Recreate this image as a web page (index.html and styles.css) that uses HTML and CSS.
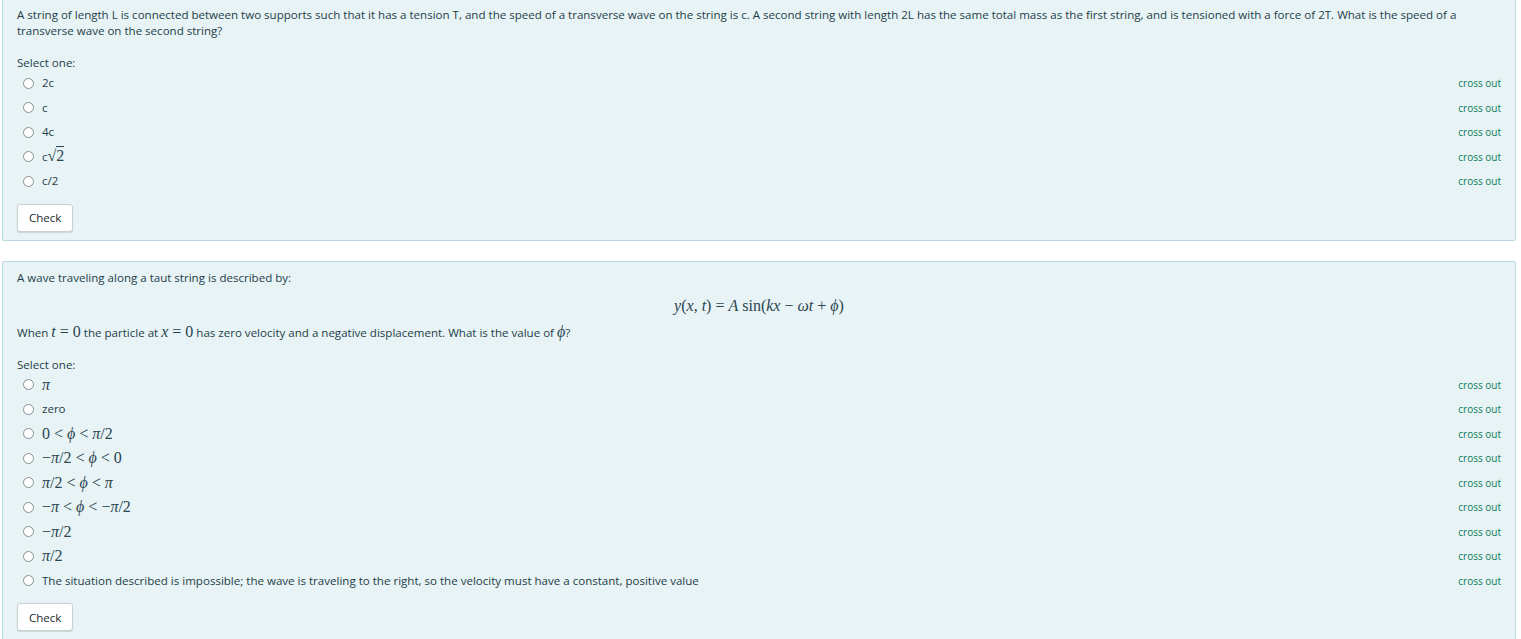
FILE: index.html
```html
<!DOCTYPE html>
<html lang="en">
<head>
<meta charset="utf-8">
<title>Quiz</title>
<link rel="stylesheet" href="styles.css">
</head>
<body>
<div class="page">
  <div class="que first">
    <div class="qtext">
      <p>A string of length L is connected between two supports such that it has a tension T, and the speed of a transverse wave on the string is c. A second string with length 2L has the same total mass as the first string, and is tensioned with a force of 2T. What is the speed of a transverse wave on the second string?</p>
    </div>
    <div class="prompt">Select one:</div>
    <div class="answer">
      <div class="opt"><span class="radio"></span><span class="lbl">2c</span><span class="cross">cross out</span></div>
      <div class="opt"><span class="radio"></span><span class="lbl">c</span><span class="cross">cross out</span></div>
      <div class="opt"><span class="radio"></span><span class="lbl">4c</span><span class="cross">cross out</span></div>
      <div class="opt"><span class="radio"></span><span class="lbl">c<span class="m sqrt">√<span class="ov">2</span></span></span><span class="cross">cross out</span></div>
      <div class="opt"><span class="radio"></span><span class="lbl">c/2</span><span class="cross">cross out</span></div>
    </div>
    <button class="check">Check</button>
  </div>

  <div class="que">
    <div class="qtext">
      <p>A wave traveling along a taut string is described by:</p>
      <div class="display m"><i>y</i>(<i>x</i>, <i>t</i>) = <i>A</i> sin(<i>kx</i> − <i>ωt</i> + <i>ϕ</i>)</div>
      <p>When <span class="m"><i>t</i> = 0</span> the particle at <span class="m"><i>x</i> = 0</span> has zero velocity and a negative displacement. What is the value of <span class="m"><i>ϕ</i></span>?</p>
    </div>
    <div class="prompt">Select one:</div>
    <div class="answer">
      <div class="opt"><span class="radio"></span><span class="lbl m"><i>π</i></span><span class="cross">cross out</span></div>
      <div class="opt"><span class="radio"></span><span class="lbl">zero</span><span class="cross">cross out</span></div>
      <div class="opt"><span class="radio"></span><span class="lbl m">0 &lt; <i>ϕ</i> &lt; <i>π</i>/2</span><span class="cross">cross out</span></div>
      <div class="opt"><span class="radio"></span><span class="lbl m">−<i>π</i>/2 &lt; <i>ϕ</i> &lt; 0</span><span class="cross">cross out</span></div>
      <div class="opt"><span class="radio"></span><span class="lbl m"><i>π</i>/2 &lt; <i>ϕ</i> &lt; <i>π</i></span><span class="cross">cross out</span></div>
      <div class="opt"><span class="radio"></span><span class="lbl m">−<i>π</i> &lt; <i>ϕ</i> &lt; −<i>π</i>/2</span><span class="cross">cross out</span></div>
      <div class="opt"><span class="radio"></span><span class="lbl m">−<i>π</i>/2</span><span class="cross">cross out</span></div>
      <div class="opt"><span class="radio"></span><span class="lbl m"><i>π</i>/2</span><span class="cross">cross out</span></div>
      <div class="opt"><span class="radio"></span><span class="lbl">The situation described is impossible; the wave is traveling to the right, so the velocity must have a constant, positive value</span><span class="cross">cross out</span></div>
    </div>
    <button class="check">Check</button>
  </div>
</div>
</body>
</html>
```
FILE: styles.css
```css
html, body {
  margin: 0;
  padding: 0;
  background: #ffffff;
}
body {
  font-family: "Open Sans", "Noto Sans", sans-serif;
  font-size: 11.55px;
  line-height: 16px;
  color: #243e49;
  overflow: hidden;
}
.page {
  padding: 0 5px 0 2px;
}
.que {
  background: #e7f3f5;
  border: 1px solid #b8dce2;
  border-radius: 2px;
  padding: 8px 14px 8px 14px;
  margin-bottom: 20px;
}
.que.first {
  margin-top: -2px;
}
.qtext p {
  margin: 0;
}
.display {
  text-align: center;
  margin: 10px 0 8px;
  line-height: 20px;
}
.m {
  font-family: "Liberation Serif", "DejaVu Serif", serif;
  font-size: 16px;
  color: #2a4450;
}
.m i {
  font-style: italic;
}
.prompt {
  margin-top: 16px;
}
.answer {
  display: flex;
  flex-direction: column;
}
.opt {
  display: flex;
  align-items: center;
  height: 24.5px;
}
.radio {
  width: 9px;
  height: 9px;
  border: 1px solid #8a8f93;
  border-radius: 50%;
  background: #ffffff;
  margin-left: 6px;
  margin-right: 8px;
  flex: none;
}
.lbl {
  flex: 1;
}
.sqrt .ov {
  border-top: 1px solid #2a4450;
}
.cross {
  color: #0a7d5a;
  font-size: 10px;
  flex: none;
}
.check {
  display: block;
  margin-top: 10px;
  height: 28px;
  padding: 0 11px;
  background: #ffffff;
  border: 1px solid #c9cfd3;
  border-radius: 3px;
  box-shadow: 0 1px 1px rgba(0,0,0,0.12);
  font-family: "Open Sans", "Noto Sans", sans-serif;
  font-size: 11.5px;
  color: #1d2a30;
}
```
